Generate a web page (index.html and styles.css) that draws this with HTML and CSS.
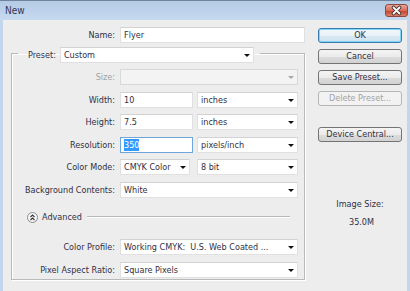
FILE: index.html
```html
<!DOCTYPE html>
<html lang="en">
<head>
    <meta charset="UTF-8">
    <title>New</title>
    <link rel="stylesheet" href="styles.css">
</head>
<body>
    <div class="window">
        <div class="titlebar">
            <span class="title">New</span>
            <div class="close">
                <svg width="23" height="13" viewBox="0 0 23 13">
                    <path d="M8.5 3.5 L14.5 9.5 M14.5 3.5 L8.5 9.5" stroke="#3a2a28" stroke-width="3.6" stroke-linecap="round"/>
                    <path d="M8.5 3.5 L14.5 9.5 M14.5 3.5 L8.5 9.5" stroke="#ffffff" stroke-width="1.8" stroke-linecap="round"/>
                </svg>
            </div>
        </div>

        <div class="dialog">
            <div class="form">
                <div class="row name-row">
                    <label>Name:</label>
                    <div class="field">Flyer</div>
                </div>

                <fieldset class="group">
                    <legend>
                        <label>Preset:</label>
                        <div class="field select preset">Custom</div>
                    </legend>

                    <div class="rows">
                        <div class="row">
                            <label class="disabled">Size:</label>
                            <div class="field select disabled"></div>
                        </div>
                        <div class="row">
                            <label>Width:</label>
                            <div class="pair">
                                <div class="field">10</div>
                                <div class="field select">inches</div>
                            </div>
                        </div>
                        <div class="row">
                            <label>Height:</label>
                            <div class="pair">
                                <div class="field">7.5</div>
                                <div class="field select">inches</div>
                            </div>
                        </div>
                        <div class="row">
                            <label>Resolution:</label>
                            <div class="pair">
                                <div class="field focused"><span class="selected">350</span></div>
                                <div class="field select">pixels/inch</div>
                            </div>
                        </div>
                        <div class="row">
                            <label>Color Mode:</label>
                            <div class="pair mode">
                                <div class="field select">CMYK Color</div>
                                <div class="field select">8 bit</div>
                            </div>
                        </div>
                        <div class="row">
                            <label>Background Contents:</label>
                            <div class="field select">White</div>
                        </div>
                    </div>

                    <div class="advanced">
                        <svg width="11" height="11" viewBox="0 0 11 11">
                            <circle cx="5.5" cy="5.5" r="5" fill="#f7f7f7" stroke="#8c8c8c"/>
                            <path d="M3.5 5 L5.5 3 L7.5 5 M3.5 8 L5.5 6 L7.5 8" fill="none" stroke="#333" stroke-width="1.1"/>
                        </svg>
                        <span>Advanced</span>
                        <div class="rule"></div>
                    </div>

                    <div class="rows">
                        <div class="row">
                            <label>Color Profile:</label>
                            <div class="field select">Working CMYK:&nbsp; U.S. Web Coated ...</div>
                        </div>
                        <div class="row">
                            <label>Pixel Aspect Ratio:</label>
                            <div class="field select">Square Pixels</div>
                        </div>
                    </div>
                </fieldset>
            </div>

            <div class="side">
                <div class="button default">OK</div>
                <div class="button">Cancel</div>
                <div class="button">Save Preset...</div>
                <div class="button disabled">Delete Preset...</div>
                <div class="button device">Device Central...</div>

                <div class="image-size">
                    <div>Image Size:</div>
                    <div class="size-value">35.0M</div>
                </div>
            </div>
        </div>
    </div>
</body>
</html>
```

FILE: styles.css
```css
body {
    margin: 0;
    font-family: "DejaVu Sans Condensed", "Liberation Sans", sans-serif;
    font-size: 9px;
    color: #303046;
    background-color: #ededed;
}

.window {
    width: 410px;
    height: 291px;
    box-sizing: border-box;
    border-top: 1px solid #71839a;
    background-color: #c2d6ed;
    padding: 0 3px;
    overflow: hidden;
}

.titlebar {
    height: 19px;
    margin: 0 -3px;
    padding: 0 2px 0 5px;
    display: flex;
    align-items: center;
    justify-content: space-between;
    background: linear-gradient(#b4cbe5, #c6d9ef);
}

.title {
    font-size: 10px;
    color: #34344f;
}

.close {
    width: 23px;
    height: 13px;
    border: 1px solid #8e4a3f;
    border-radius: 3px;
    box-sizing: border-box;
    background: linear-gradient(#e9a596, #d56e5b 50%, #c6432c 55%, #d9806a);
    display: flex;
    align-items: center;
    justify-content: center;
}

.close svg {
    display: block;
    margin: -1px;
}

.dialog {
    height: 271px;
    box-sizing: border-box;
    background-color: #ededed;
    padding-top: 7px;
    display: grid;
    grid-template-columns: 302px 84px;
    column-gap: 13px;
    align-items: start;
}

.row {
    display: grid;
    grid-template-columns: 103px 1fr;
    column-gap: 5px;
    align-items: center;
    height: 16px;
}

.row label {
    text-align: right;
    white-space: nowrap;
}

.name-row {
    grid-template-columns: 112px 185px;
}

label.disabled {
    color: #a2a2a2;
}

.field {
    position: relative;
    height: 16px;
    box-sizing: border-box;
    background-color: #fff;
    border: 1px solid #e0e0e0;
    border-top-color: #d2d2d2;
    padding: 0 3px;
    line-height: 14px;
    white-space: nowrap;
    overflow: hidden;
}

.select::after {
    content: "";
    position: absolute;
    right: 3px;
    top: 6px;
    border-left: 3px solid transparent;
    border-right: 3px solid transparent;
    border-top: 3px solid #111;
}

.field.disabled {
    background-color: #f3f3f3;
    border-color: #d8d8d8;
}

.field.disabled::after {
    border-top-color: #a8a8a8;
}

.field.focused {
    border-color: #6ea5dd;
}

.selected {
    background-color: #3399ff;
    color: #fff;
    padding: 1px 0;
}

.group {
    margin: 0 0 0 8px;
    padding: 6px 6px 1px 0;
    border: 1px solid #b9b9b9;
    box-shadow: inset 1px 1px 0 #fff, 1px 1px 0 #fff;
    min-width: 0;
}

.group legend {
    margin-left: 6px;
    padding: 4px 6px 0 10px;
    display: flex;
    align-items: center;
    gap: 4px;
}

.preset {
    width: 194px;
}

.rows {
    display: flex;
    flex-direction: column;
    gap: 6.5px;
}

.pair {
    display: grid;
    grid-template-columns: 73px 1fr;
    column-gap: 4px;
}

.pair.mode {
    grid-template-columns: 70px 1fr;
    column-gap: 7px;
}

.advanced {
    display: flex;
    align-items: center;
    height: 16px;
    margin: 11.5px 8px 14px 15px;
}

.advanced svg {
    display: block;
}

.advanced span {
    margin: 0 5px 0 4px;
}

.rule {
    flex: 1;
    height: 1px;
    background-color: #b9b9b9;
    border-bottom: 1px solid #fff;
}

.side {
    display: flex;
    flex-direction: column;
    gap: 6px;
    padding-top: 1px;
}

.button {
    height: 15px;
    box-sizing: border-box;
    border: 1px solid #747474;
    border-radius: 3px;
    background: linear-gradient(#f4f4f4, #ebebeb 50%, #dcdcdc 52%, #d2d2d2);
    text-align: center;
    line-height: 13px;
}

.button.default {
    border-color: #3a7bb0;
    box-shadow: inset 0 0 0 1px #7fd6f7;
    background: linear-gradient(#f1f7fb, #e8f1f7 50%, #d8e9f3 52%, #cde3f0);
}

.button.disabled {
    color: #a3a3a3;
    border-color: #b2b6b9;
    background: #f2f2f2;
}

.button.device {
    margin-top: 15px;
}

.image-size {
    margin-top: 51px;
    text-align: center;
    line-height: 11px;
}

.size-value {
    margin-top: 7px;
    padding-left: 3px;
}
```
